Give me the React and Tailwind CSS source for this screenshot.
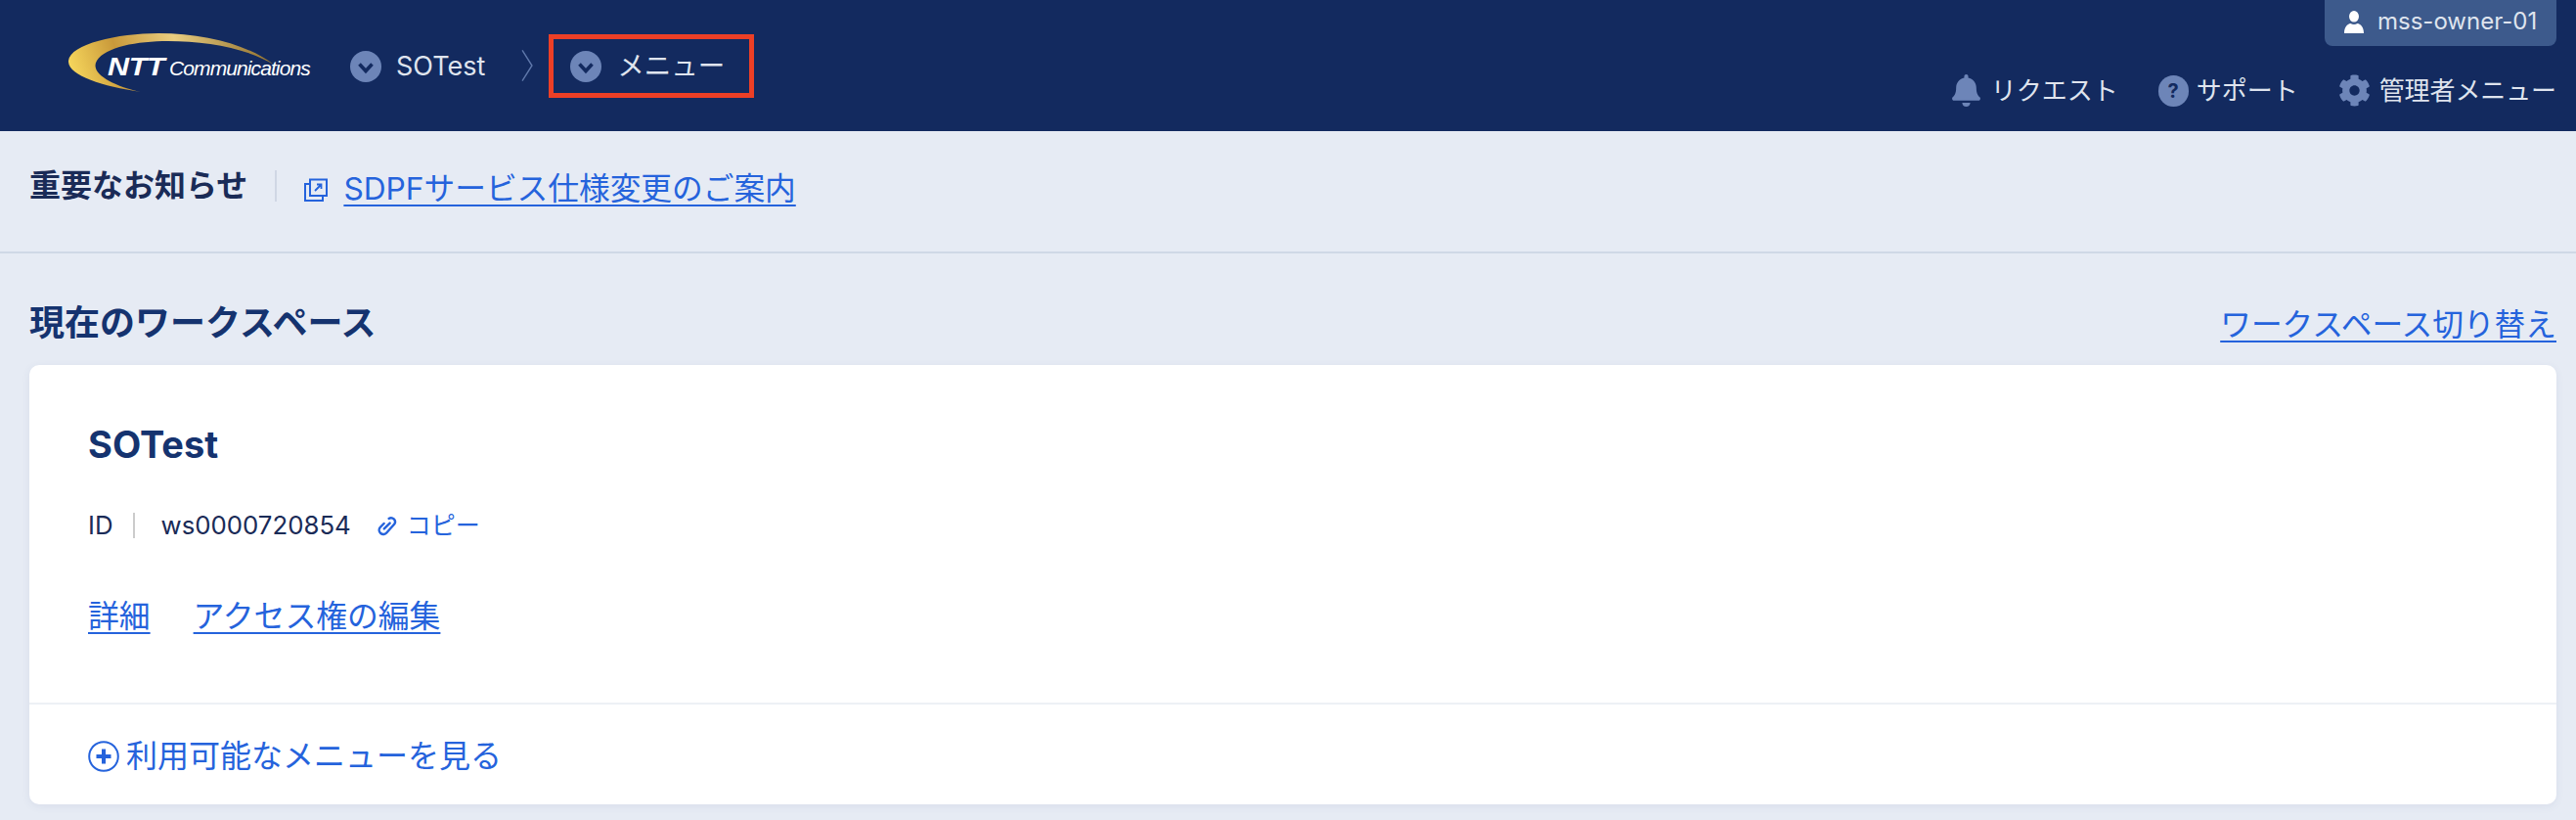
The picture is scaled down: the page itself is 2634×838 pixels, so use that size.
import React from "react";
import { FaBell, FaCog } from "react-icons/fa";

function ChevCircle() {
  return (
    <svg viewBox="0 0 32 32" className="w-[32px] h-[32px] shrink-0">
      <circle cx="16" cy="16" r="16" fill="#6d85b8" />
      <path d="M9.5 13.5 L16 20.5 L22.5 13.5" fill="none" stroke="#132a5f" strokeWidth="3.6" />
    </svg>
  );
}
function Logo() {
  return (
    <div className="relative w-[248px] h-[60px] shrink-0 mb-[6px]">
      <svg viewBox="0 0 248 60" className="absolute left-0 top-0 w-[248px] h-[60px]">
        <defs>
          <linearGradient id="g1" x1="0" y1="0.5" x2="1" y2="0.4">
            <stop offset="0" stopColor="#f6d65c" />
            <stop offset="0.25" stopColor="#c9993a" />
            <stop offset="0.55" stopColor="#e9cd80" />
            <stop offset="1" stopColor="#8f6f2d" />
          </linearGradient>
        </defs>
        <path d="M210 32 C182 15 140 8 102 8 C70 8 38 14 29 28 C21 41 46 54 74 60 C34 54 -1 43 0 28 C2 11 50 0 92 0 C140 0 184 12 210 32 Z" fill="url(#g1)" />
      </svg>
      <div className="absolute left-[40px] top-[22px] flex items-baseline text-white italic font-['Liberation_Sans',sans-serif] leading-none whitespace-nowrap">
        <span className="inline-block w-[62px] text-[25px] font-bold scale-x-[1.22] origin-left tracking-[-0.3px]">NTT</span>
        <span className="text-[21px] tracking-[-0.9px] ml-[1px]">Communications</span>
      </div>
    </div>
  );
}
function UserIcon() {
  return (
    <svg viewBox="0 0 20 23" className="w-[20px] h-[23px] shrink-0" fill="#ffffff">
      <ellipse cx="10" cy="5.8" rx="5" ry="5.8" />
      <path d="M0 23 C0 17 3 13.5 6.5 13 C8.5 14.2 11.5 14.2 13.5 13 C17 13.5 20 17 20 23 Z" />
    </svg>
  );
}
function ExtIcon() {
  return (
    <svg viewBox="0 0 24 24" className="w-[24px] h-[24px] shrink-0" fill="none" stroke="#2563dc" strokeWidth="2">
      <path d="M6 1.5 H23 V18 H6 Z" />
      <path d="M6 6 H1 V23 H19 V18" />
      <path d="M11 13 L17 7 M13 6.5 H17.5 V11" strokeWidth="1.8" />
    </svg>
  );
}
function ChainIcon() {
  return (
    <svg viewBox="0 0 20 20" className="w-[21px] h-[21px] shrink-0" fill="none" stroke="#2563dc" strokeWidth="2.3" strokeLinecap="round">
      <path d="M12 2.8 a3.9 3.9 0 0 1 5.4 5.4 L9.8 16.6 a4 4 0 0 1 -6.3 -5.2 L7.2 7.6" />
      <path d="M7.4 12.8 L13 7.2" />
    </svg>
  );
}
function QIcon() {
  return (
    <div className="w-[31px] h-[32px] rounded-full bg-[#6d85b8] flex items-center justify-center text-[#132a5f] text-[20px] font-bold leading-none shrink-0">?</div>
  );
}
function PlusIcon() {
  return (
    <svg viewBox="0 0 32 32" className="w-[32px] h-[32px] shrink-0" fill="none" stroke="#2563dc">
      <circle cx="16" cy="16" r="14.8" strokeWidth="2" />
      <path d="M16 8.5 V23.5 M8.5 16 H23.5" strokeWidth="4" />
    </svg>
  );
}
const link = "text-[#2563dc] underline underline-offset-[5px] decoration-2";

export default function App() {
  return (
    <div className="min-h-[838px] bg-[#e6ebf4] text-[#1a2b57] font-['Inter','Noto_Sans_CJK_JP',sans-serif]">
      <header className="h-[134px] bg-[#132a5f] flex justify-between overflow-hidden">
        <div className="flex items-center pl-[70px]">
          <Logo />
          <div className="flex items-center ml-[40px] pt-[2px] gap-[15px] text-[#dfe4ee] text-[27px]">
            <ChevCircle />
            <span>SOTest</span>
          </div>
          <svg viewBox="0 0 18 48" className="w-[18px] h-[34px] ml-[34px] mr-[13px]" fill="none" stroke="#5f78ab" strokeWidth="2"><path d="M2 2 L16 24 L2 46" /></svg>
          <div className="flex items-center h-[65px] pl-[17px] pt-[2px] w-[210px] gap-[16px] border-[5px] border-[#ec3f26] text-[#dfe4ee] text-[27.5px]">
            <ChevCircle />
            <span>メニュー</span>
          </div>
        </div>
        <div className="flex flex-col items-end pr-[20px]">
          <div className="h-[47px] w-[237px] bg-[#3d5a8c] rounded-b-[8px] flex items-center pl-[20px] pb-[3px] gap-[14px] text-[#dfe4ee] text-[24px]">
            <UserIcon />
            <span>mss-owner-01</span>
          </div>
          <nav className="flex items-center mt-[26px] text-[#dfe4ee] text-[26px] whitespace-nowrap">
            <FaBell className="text-[#6d85b8] w-[31px] h-[33px] mr-[10px]" />
            <span>リクエスト</span>
            <span className="ml-[41px] mr-[8px]"><QIcon /></span>
            <span>サポート</span>
            <FaCog className="text-[#6d85b8] w-[33px] h-[33px] ml-[41px] mr-[9px]" />
            <span className="tracking-[-0.1px]">管理者メニュー</span>
          </nav>
        </div>
      </header>

      <section className="h-[125px] border-b-2 border-[#cfd8e6] px-[30px] flex items-start pt-[36px]">
        <h2 className="text-[32px] font-bold text-[#1a2b57] leading-[40px]">重要なお知らせ</h2>
        <div className="w-[2px] h-[32px] bg-[#d0d7e4] ml-[28px] mr-[28px] mt-[4px]" />
        <div className="mt-[12px]"><ExtIcon /></div>
        <a className={"ml-[16px] mt-[1px] text-[31.7px] leading-[44px] " + link}>SDPFサービス仕様変更のご案内</a>
      </section>

      <main className="pr-[20px] pl-[30px]">
        <div className="flex justify-between items-end h-[114px] pb-[20px]">
          <h1 className="text-[36px] font-bold text-[#15336f] leading-[46px]">現在のワークスペース</h1>
          <a className={"text-[31.7px] leading-[42px] " + link}>ワークスペース切り替え</a>
        </div>
        <div className="bg-white rounded-[10px] shadow-[0_2px_8px_rgba(60,80,130,0.08)]">
          <div className="h-[347px] pl-[60px] pt-[59px] border-b-2 border-[#edf1f5]">
            <h3 className="text-[38px] font-bold text-[#15336f] leading-[44px]">SOTest</h3>
            <div className="flex items-center mt-[45px] text-[25.8px] leading-[32px]">
              <span>ID</span>
              <div className="w-[2px] h-[26px] bg-[#cccccc] ml-[20px] mr-[27px]" />
              <span>ws0000720854</span>
              <span className="ml-[26px]"><ChainIcon /></span>
              <span className="ml-[10px] text-[25px] text-[#2563dc]">コピー</span>
            </div>
            <div className="flex mt-[55px] gap-[44px] text-[31.8px] leading-[44px]">
              <a className={link}>詳細</a>
              <a className={link}>アクセス権の編集</a>
            </div>
          </div>
          <div className="h-[102px] pl-[60px] pt-[3px] flex items-center gap-[7px] text-[#2563dc] text-[32px]">
            <PlusIcon />
            <span>利用可能なメニューを見る</span>
          </div>
        </div>
      </main>
    </div>
  );
}
